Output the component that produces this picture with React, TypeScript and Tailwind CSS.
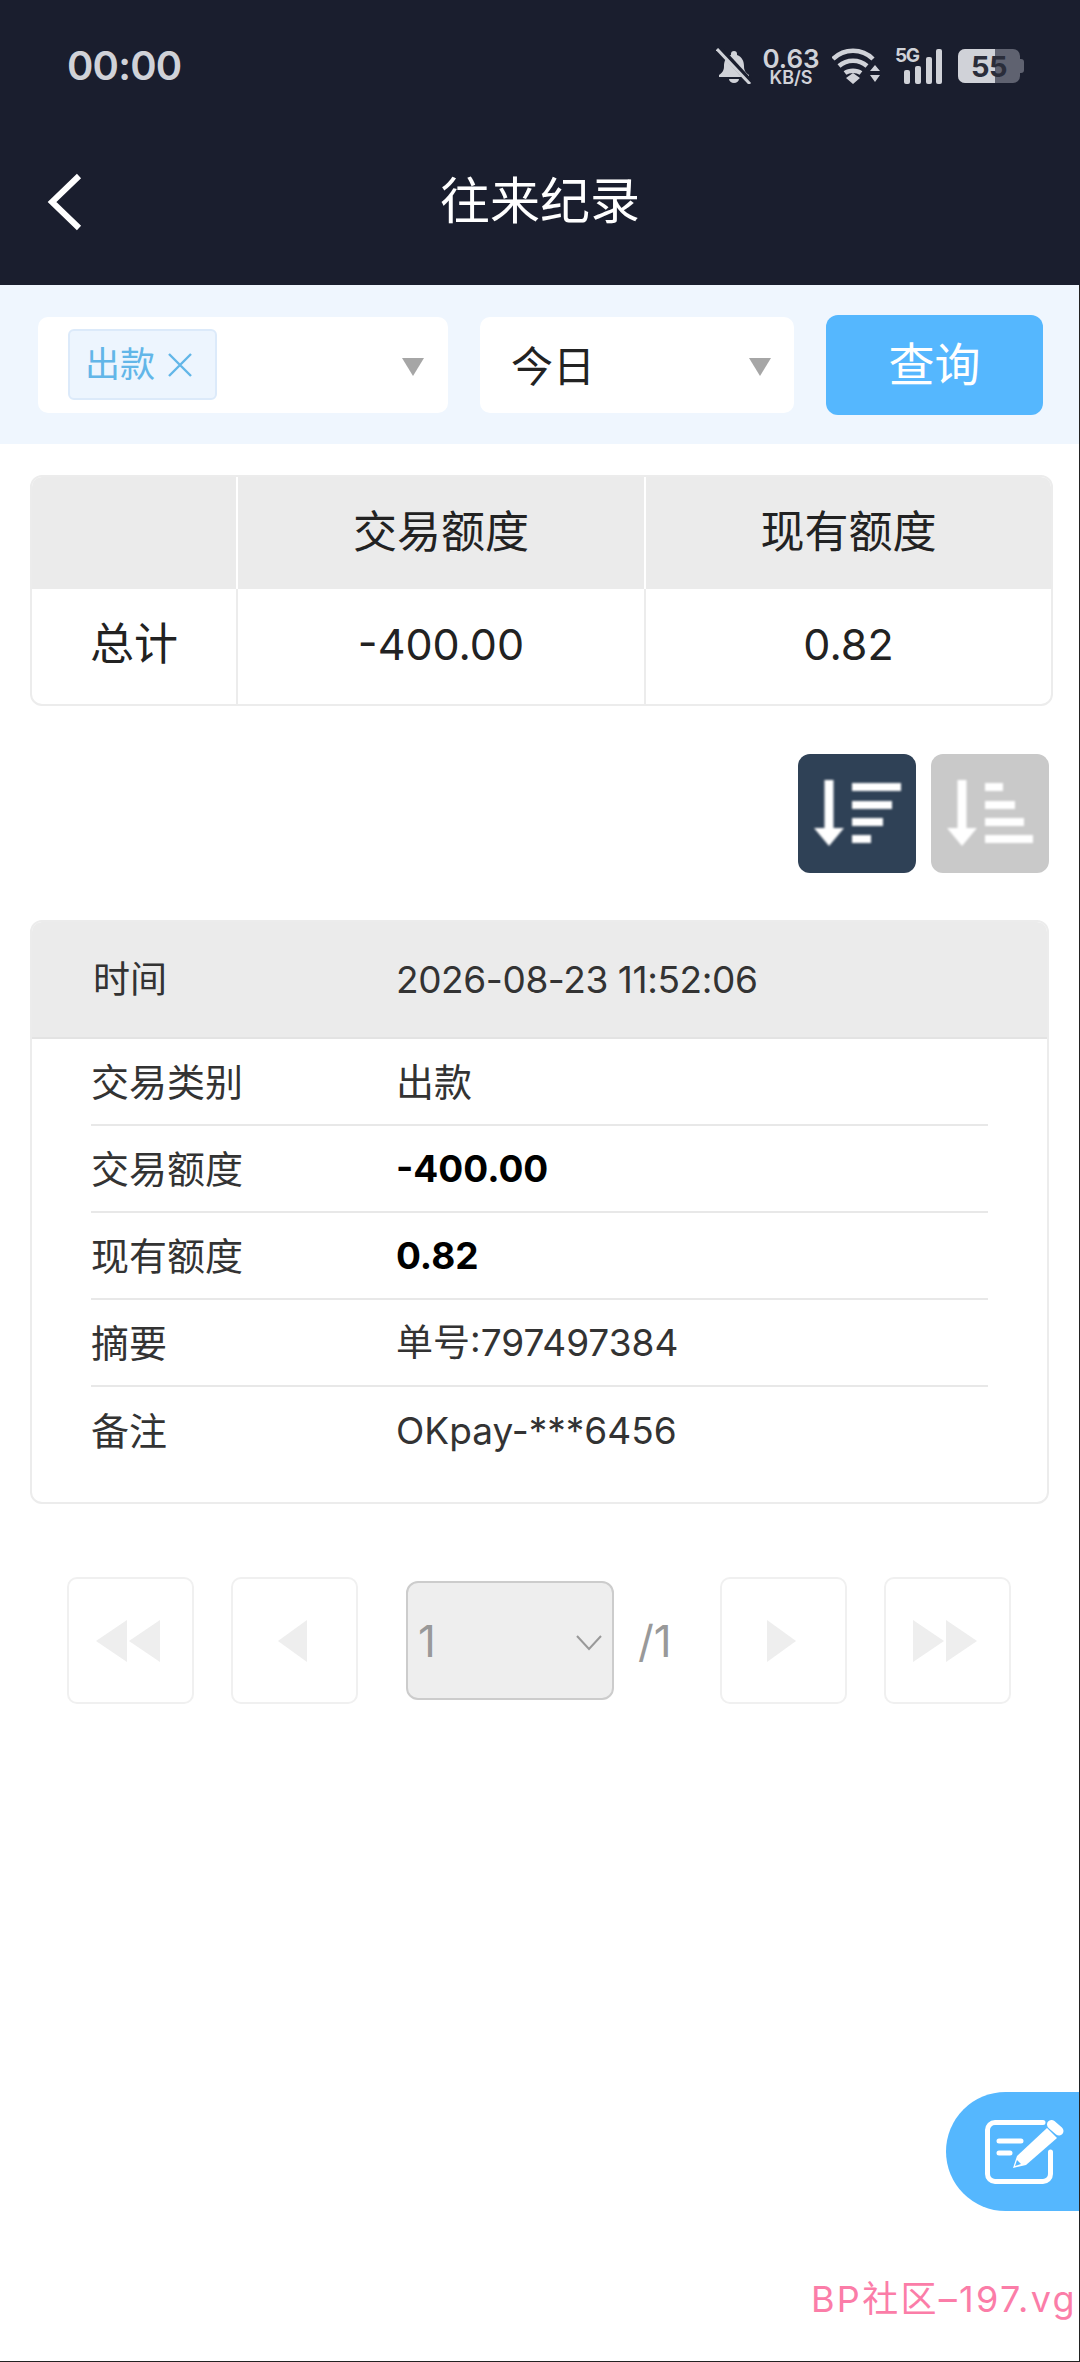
const CJK = "Inter, 'Noto Sans CJK SC', sans-serif";

function Tri({ className }: { className: string }) {
  return (
    <svg width="22" height="18" viewBox="0 0 22 18" className={className}>
      <path d="M0 0H22L11 18Z" fill="#a6a6a6" />
    </svg>
  );
}

function StatusIcons() {
  return (
    <div className="flex items-center text-[#d0d2d8]">
      <svg width="36" height="36" viewBox="0 0 36 36" className="mr-[10px]">
        <path d="M18 3a3 3 0 0 1 3 3v1c5 2 7 6 7 11 0 4 1 6 5 9v2H3v-2c4-3 5-5 5-9 0-5 2-9 7-11V6a3 3 0 0 1 3-3z" fill="#d0d2d8" />
        <path d="M13 31h10a5 4 0 0 1-10 0z" fill="#d0d2d8" />
        <path d="M3 0l33 36" stroke="#1a1e2e" strokeWidth="6" />
        <path d="M1 1l33 35" stroke="#d0d2d8" strokeWidth="3" />
      </svg>
      <div className="flex w-[58px] flex-col items-center font-['Inter'] font-semibold leading-none">
        <span className="text-[26px] leading-[23px]">0.63</span>
        <span className="text-[18px] leading-[15px]">KB/S</span>
      </div>
      <svg width="50" height="36" viewBox="0 0 50 36" className="ml-[12px]">
        <path d="M1 11C12 0 30 0 41 11M7 18c8-7 20-7 28 0M13 25c4-3 12-3 16 0" fill="none" stroke="#d0d2d8" strokeWidth="4.5" />
        <path d="M14 30l7-5 7 5-7 6zM38 23l5-6 5 6zM38 27h10l-5 7z" fill="#d0d2d8" />
      </svg>
      <div className="relative ml-[13px] h-[36px] w-[47px]">
        <span className="absolute left-0 top-[-2px] font-['Inter'] text-[19px] font-bold leading-[19px] tracking-[-1.5px]">5G</span>
        <div className="absolute bottom-0 left-[9px] h-[14px] w-[6px] rounded-[2px] bg-[#d0d2d8]" />
        <div className="absolute bottom-0 left-[20px] h-[18px] w-[6px] rounded-[2px] bg-[#d0d2d8]" />
        <div className="absolute bottom-0 left-[31px] h-[27px] w-[6px] rounded-[2px] bg-[#d0d2d8]" />
        <div className="absolute bottom-0 left-[41px] h-[35px] w-[6px] rounded-[2px] bg-[#d0d2d8]" />
      </div>
      <div className="relative ml-[16px] flex h-[34px] w-[62px] items-center justify-center overflow-hidden rounded-[7px] bg-[#5f6270]">
        <div className="absolute inset-y-0 left-0 w-[37px] bg-[#d0d2d8]" />
        <span className="relative font-['Inter'] text-[29px] font-bold leading-none tracking-[-0.5px] text-[#2a2d3a]">55</span>
      </div>
      <div className="h-[14px] w-[4px] rounded-r-[3px] bg-[#5f6270]" />
    </div>
  );
}

function Row({ label, value, bold, cjk }: { label: string; value: string; bold?: boolean; cjk?: boolean }) {
  return (
    <div className="flex h-[87px] items-center border-b-2 border-[#e8e8e8] pt-[1px] last:border-b-0">
      <span className="w-[305px] text-[38px] text-[#333]">{label}</span>
      <span className={(bold ? "font-bold text-black " : "text-[#333] ") + (cjk ? "text-[38px]" : "text-[37px]")}>{value}</span>
    </div>
  );
}

function PageBtn({ children }: { children: React.ReactNode }) {
  return (
    <div className="flex h-[127px] w-[127px] items-center justify-center rounded-[10px] border-2 border-[#f0f0f0]">
      <svg width="66" height="42" viewBox="0 0 66 42" className="overflow-visible">
        {children}
      </svg>
    </div>
  );
}

export default function App() {
  return (
    <div className="relative h-[2362px] w-[1080px] overflow-hidden bg-white" style={{ fontFamily: CJK }}>
      <header className="h-[285px] bg-[#1a1e2e]">
        <div className="flex h-[132px] items-center justify-between pl-[67px] pr-[56px]">
          <span className="font-['Inter'] text-[40px] font-semibold tracking-[-0.8px] text-[#d0d2d8]">00:00</span>
          <StatusIcons />
        </div>
        <div className="relative mt-[27px] flex h-[85px] items-center justify-center">
          <svg width="38" height="58" viewBox="0 0 38 58" className="absolute left-[46px] top-[14px]">
            <path d="M33 3L6 29l27 26" fill="none" stroke="#fff" strokeWidth="6" />
          </svg>
          <h1 className="text-[50px] font-normal text-white">往来纪录</h1>
        </div>
      </header>

      <div className="flex h-[159px] items-center bg-[#eff6fe] pl-[38px] pr-[37px]">
        <div className="relative flex h-[96px] w-[410px] items-center rounded-[10px] bg-white pl-[30px]">
          <div className="flex h-[71px] w-[149px] items-center gap-[12px] rounded-[6px] border-2 border-[#dceafa] bg-[#edf5fe] pl-[15px] text-[35px] text-[#62b6e8]">
            <span>出款</span>
            <svg width="26" height="26" viewBox="0 0 26 26"><path d="M2 2l22 22M24 2L2 24" stroke="#62b6e8" strokeWidth="2.4" /></svg>
          </div>
          <Tri className="absolute right-[24px] top-[41px]" />
        </div>
        <div className="relative ml-[32px] flex h-[96px] w-[314px] items-center rounded-[10px] bg-white pl-[31px] pt-[3px] text-[42px] text-[#222]">
          今日
          <Tri className="absolute right-[23px] top-[41px]" />
        </div>
        <button className="ml-[32px] h-[100px] w-[217px] rounded-[12px] bg-[#55b7fe] text-[46px] text-white">查询</button>
      </div>

      <section className="ml-[30px] mt-[31px] h-[231px] w-[1023px] overflow-hidden rounded-[12px] border-2 border-[#ececec] text-[44px] text-[#222]">
        <div className="grid h-[112px] grid-cols-[206px_408px_1fr] bg-[#ebebeb] text-center">
          <div className="border-r-2 border-white" />
          <div className="flex items-center justify-center border-r-2 border-white pb-[2px]">交易额度</div>
          <div className="flex items-center justify-center pb-[2px]">现有额度</div>
        </div>
        <div className="grid h-[115px] grid-cols-[206px_408px_1fr] text-center">
          <div className="flex items-center justify-center border-r-2 border-[#ececec] pb-[5px]">总计</div>
          <div className="flex items-center justify-center border-r-2 border-[#ececec] pb-[5px] text-[43px]">-400.00</div>
          <div className="flex items-center justify-center pb-[5px] text-[43px]">0.82</div>
        </div>
      </section>

      <div className="mr-[31px] mt-[48px] flex justify-end gap-[15px]">
        <div className="flex h-[119px] w-[118px] items-center justify-center rounded-[12px] bg-[#2f4156]">
          <svg width="88" height="68" viewBox="0 0 88 68" className="blur-[1px]">
            <path d="M11.5 0h9v48H31L16 66 1 48h10.5z" fill="#fff" />
            <path d="M39 7h49M39 25h40M39 42h31M39 59h19" stroke="#fff" strokeWidth="8" />
          </svg>
        </div>
        <div className="flex h-[119px] w-[118px] items-center justify-center rounded-[12px] bg-[#c9c9c9]">
          <svg width="88" height="68" viewBox="0 0 88 68" className="blur-[1px]">
            <path d="M11.5 0h9v48H31L16 66 1 48h10.5z" fill="#fff" />
            <path d="M39 7h18M39 25h30M39 42h39M39 59h48" stroke="#fff" strokeWidth="8" />
          </svg>
        </div>
      </div>

      <section className="ml-[30px] mt-[47px] h-[584px] w-[1019px] overflow-hidden rounded-[12px] border-2 border-[#ececec]">
        <div className="flex h-[117px] items-center border-b-2 border-[#e3e3e3] bg-[#ebebeb] pl-[61px] text-[#333]">
          <span className="w-[303px] text-[37px]">时间</span>
          <span className="text-[37px] tracking-[-0.4px]">2026-08-23 11:52:06</span>
        </div>
        <div className="pl-[59px] pr-[59px]">
          <Row label="交易类别" value="出款" cjk />
          <Row label="交易额度" value="-400.00" bold />
          <Row label="现有额度" value="0.82" bold />
          <Row label="摘要" value="单号:797497384" />
          <Row label="备注" value="OKpay-***6456" />
        </div>
      </section>

      <nav className="mt-[73px] flex items-center pl-[67px]">
        <PageBtn><path d="M29 0v42L-2 21zM62 0v42L31 21z" fill="#eeeeee" /></PageBtn>
        <div className="ml-[37px]">
          <PageBtn><path d="M45 0v42L16 21z" fill="#eeeeee" /></PageBtn>
        </div>
        <div className="relative ml-[48px] flex h-[119px] w-[208px] items-center rounded-[12px] border-2 border-[#cccccc] bg-[#eeeeee] pl-[10px] text-[44px] text-[#999]">
          1
          <svg width="26" height="16" viewBox="0 0 26 16" className="absolute right-[10px] top-[52px]">
            <path d="M1 1l12 13L25 1" fill="none" stroke="#999" strokeWidth="2" />
          </svg>
        </div>
        <span className="ml-[24px] w-[82px] text-[44px] text-[#999]">/1</span>
        <PageBtn><path d="M16 0v42l29-21z" fill="#eeeeee" /></PageBtn>
        <div className="ml-[37px]">
          <PageBtn><path d="M-2 0v42l31-21zM31 0v42l31-21z" fill="#eeeeee" /></PageBtn>
        </div>
      </nav>

      <div className="absolute left-[946px] top-[2092px] flex h-[119px] w-[134px] items-center rounded-l-[60px] bg-[#55b7fe] pl-[37px]">
        <svg width="82" height="68" viewBox="0 0 82 68">
          <path d="M60 4.5H12a7.5 7.5 0 0 0-7.5 7.5v44a7.5 7.5 0 0 0 7.5 7.5h48a7.5 7.5 0 0 0 7.5-7.5V34" fill="none" stroke="#fff" strokeWidth="5" strokeLinecap="round" />
          <path d="M16 23h22M16 35h11" stroke="#fff" strokeWidth="5" strokeLinecap="round" />
          <path d="M30 50l4-12 30-28 10 10-31 27z" fill="#fff" />
          <path d="M68.5 6.5l7.5 6.500" stroke="#fff" strokeWidth="9" strokeLinecap="round" />
          <path d="M32 48l2-6 4 4z" fill="#55b7fe" />
        </svg>
      </div>

      <div className="absolute left-[811px] top-[2276px] whitespace-nowrap text-[36px] leading-[46px] tracking-[2.3px] text-[#fb7da8]">
        BP社区–197.vg
      </div>

      <div className="absolute bottom-0 right-0 top-[285px] w-px bg-[#222]" />
      <div className="absolute bottom-0 left-0 right-0 h-px bg-[#222]" />
    </div>
  );
}
